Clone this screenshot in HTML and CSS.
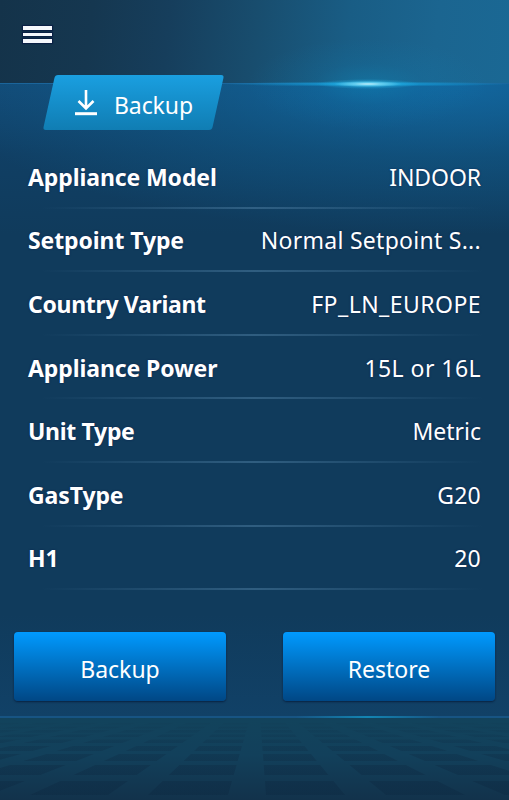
FILE: index.html
```html
<!DOCTYPE html>
<html lang="en">
<head>
    <meta charset="UTF-8">
    <title>Backup</title>
    <link rel="stylesheet" href="styles.css">
</head>
<body>
<div class="screen">
    <div class="header">
        <div class="menu">
            <span></span>
            <span></span>
            <span></span>
        </div>
        <div class="glow"></div>
        <div class="flare"></div>
    </div>

    <div class="main">
        <div class="tab">
            <svg class="tab-icon" width="24" height="28" viewBox="0 0 24 28">
                <path d="M12 1v18M4.500 12l7.500 7.500 7.500-7.500" fill="none" stroke="#fff" stroke-width="2.600"/>
                <path d="M1 24.700h22" stroke="#fff" stroke-width="3"/>
            </svg>
            <span class="tab-text">Backup</span>
        </div>

        <ul class="list">
            <li><b>Appliance Model</b><span class="model">INDOOR</span></li>
            <li><b>Setpoint Type</b><span>Normal Setpoint S...</span></li>
            <li><b class="tight">Country Variant</b><span class="wide">FP_LN_EUROPE</span></li>
            <li><b>Appliance Power</b><span class="wide">15L or 16L</span></li>
            <li><b class="tight">Unit Type</b><span class="metric">Metric</span></li>
            <li><b>GasType</b><span>G20</span></li>
            <li><b>H1</b><span>20</span></li>
        </ul>

        <div class="buttons">
            <button>Backup</button>
            <button>Restore</button>
        </div>
    </div>

    <div class="floor">
        <!-- tiles run to a point above the floor, the rects cut them into rows -->
        <svg width="509" height="82" viewBox="0 718 509 82">
            <defs>
                <clipPath id="rows">
                    <rect x="0" y="723" width="509" height="1.500"/>
                    <rect x="0" y="726.500" width="509" height="2"/>
                    <rect x="0" y="730" width="509" height="2.500"/>
                    <rect x="0" y="734.500" width="509" height="2.500"/>
                    <rect x="0" y="739.500" width="509" height="3.500"/>
                    <rect x="0" y="746" width="509" height="5"/>
                    <rect x="0" y="754" width="509" height="7"/>
                    <rect x="0" y="765" width="509" height="10"/>
                    <rect x="0" y="781" width="509" height="14.500"/>
                </clipPath>
                <linearGradient id="tile" gradientUnits="userSpaceOnUse" x1="0" y1="720" x2="0" y2="796">
                    <stop offset="0" stop-color="#0e2c45" stop-opacity=".05"/>
                    <stop offset=".4" stop-color="#0e2c45" stop-opacity=".32"/>
                    <stop offset="1" stop-color="#0e2c45" stop-opacity=".6"/>
                </linearGradient>
            </defs>
            <g clip-path="url(#rows)">
                <path fill="url(#tile)" d="M258 690L-565 795H-486zM258 690L-446 795H-368zM258 690L-327 795H-249zM258 690L-208 795H-130zM258 690L-89 795H-11zM258 690L30 795H108zM258 690L148 795H228zM258 690L266 795H345zM258 690L386 795H465zM258 690L505 795H584zM258 690L624 795H703zM258 690L743 795H822zM258 690L862 795H941zM258 690L981 795H1060z"/>
            </g>
        </svg>
    </div>
</div>
</body>
</html>
```
FILE: styles.css
```css
* {
    box-sizing: border-box;
}
body {
    margin: 0;
    font-family: "Noto Sans", sans-serif;
    font-size: 23px;
    color: #fff;
    background-color: #103b5c;
}
ul, li {
    list-style: none;
    padding: 0;
    margin: 0;
}
.screen {
    width: 509px;
    height: 800px;
    overflow: hidden;
    display: flex;
    flex-direction: column;
}
.header {
    position: relative;
    height: 83px;
    padding: 26px 0 0 23px;
    background: linear-gradient(96deg, #14334a 0%, #153750 18%, #163e5c 33%, #184d6e 50%, #195d85 68%, #1b6590 85%, #1a6894 100%);
}
.menu {
    display: flex;
    flex-direction: column;
    gap: 3px;
    width: 29px;
}
.menu span {
    height: 3.500px;
    background-color: #f5f8fc;
    box-shadow: 0 0 1px 1px rgba(5, 20, 65, .6);
}
.glow {
    position: absolute;
    left: 248px;
    top: 38px;
    width: 240px;
    height: 92px;
    z-index: 1;
    background: radial-gradient(closest-side, rgba(12, 145, 196, .35), rgba(12, 135, 190, .12) 45%, rgba(12, 130, 185, 0));
}
.flare {
    position: absolute;
    left: 218px;
    top: 76px;
    width: 300px;
    height: 16px;
    z-index: 2;
    background:
        radial-gradient(34px 3px at 50% 50%, #c5f0fa, rgba(130, 220, 245, .7) 40%, rgba(60, 185, 230, 0)),
        radial-gradient(52px 5px at 50% 50%, #28b7e8, rgba(22, 160, 215, 0)),
        radial-gradient(145px 2.500px at 50% 50%, #16a2de, rgba(22, 150, 210, 0));
}
.main {
    height: 633px;
    border-top: 1px solid #1b659b;
    background:
        radial-gradient(520px 150px at 450px 0, rgba(18, 112, 172, .75), rgba(17, 103, 155, .4) 50%, rgba(16, 59, 92, 0)),
        linear-gradient(#124a76, #103f64 70px, #103b5c 150px, #103b5c 530px, #114167 633px);
}
.tab {
    position: relative;
    z-index: 3;
    display: flex;
    align-items: center;
    width: 169px;
    height: 55px;
    margin: -9px 0 0 49px;
    padding-left: 25px;
}
.tab:before {
    content: "";
    position: absolute;
    left: 0;
    top: 0;
    width: 100%;
    height: 100%;
    z-index: -1;
    border-radius: 3px;
    background: linear-gradient(#1a9fe0, #107db3);
    transform: skewX(-12.500deg);
}
.tab-text {
    margin-left: 16px;
    padding-top: 5px;
    letter-spacing: -.1px;
}
.list {
    margin-top: 15px;
}
.list li {
    display: flex;
    justify-content: space-between;
    align-items: center;
    height: 63.600px;
    padding: 0 28px;
    background: linear-gradient(90deg, rgba(74, 122, 158, 0) 8%, rgba(74, 122, 158, .55) 50%, rgba(74, 122, 158, 0) 95%) left bottom / 100% 2px no-repeat;
}
.list span, .list b {
    text-shadow: 0 0 2px rgba(5, 15, 70, .6);
}
.list b {
    letter-spacing: -.1px;
}
.list span {
    letter-spacing: .27px;
}
.list .tight {
    letter-spacing: -.32px;
}
.list .wide {
    letter-spacing: .45px;
}
.list .model {
    letter-spacing: -.1px;
}
.list .metric {
    letter-spacing: 0;
}
.buttons {
    display: flex;
    justify-content: space-between;
    padding: 42px 14px 0;
}
.buttons button {
    width: 212px;
    height: 69px;
    padding: 5px 0 0;
    border: none;
    border-radius: 4px;
    font: inherit;
    color: #fff;
    background: linear-gradient(#009aff, #004785);
    box-shadow: 0 1px 2px rgba(5, 20, 50, .7);
}
.floor {
    height: 84px;
    border-top: 2px solid #175483;
    border-image: linear-gradient(90deg, #175483 58%, #1385b3 72%, #175483 86%) 2;
    background: linear-gradient(#12435c, #12405b 45%, #12324b);
}
.floor svg {
    display: block;
}
```
